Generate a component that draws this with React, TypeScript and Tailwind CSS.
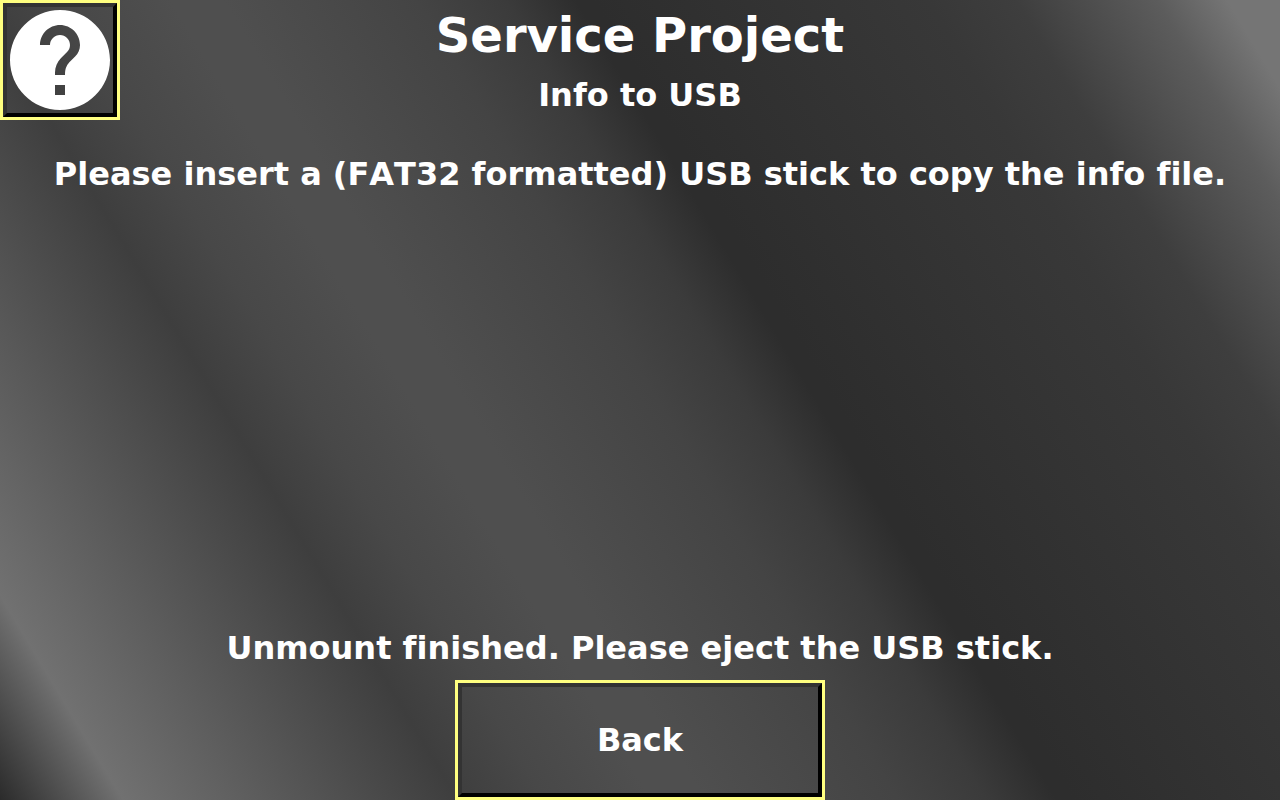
import React from 'react';

interface PanelButtonProps {
  label?: string;
  className: string;
  onClick?: () => void;
  children: React.ReactNode;
}

// Yellow outline with a sunken bevel inside it
const PanelButton: React.FC<PanelButtonProps> = ({ label, className, onClick, children }) => (
  <button
    type="button"
    aria-label={label}
    onClick={onClick}
    className={`h-[120px] cursor-pointer border-3 border-[#ffff80] font-bold text-white ${className}`}
  >
    <span className="flex h-full w-full items-center justify-center border-4 border-t-[#333333] border-r-black border-b-black border-l-[#333333]">
      {children}
    </span>
  </button>
);

const HelpIcon: React.FC = () => (
  <svg viewBox="2 2 20 20" className="size-[100px] shrink-0 fill-white" aria-hidden="true">
    <path d="M12 2C6.48 2 2 6.48 2 12s4.48 10 10 10 10-4.48 10-10S17.52 2 12 2zm1 17h-2v-2h2v2zm2.07-7.75l-.9.92C13.45 12.9 13 13.5 13 15h-2v-.5c0-1.1.45-2.1 1.17-2.83l1.24-1.26c.37-.36.59-.86.59-1.41 0-1.1-.9-2-2-2s-2 .9-2 2H8c0-2.21 1.79-4 4-4s4 1.79 4 4c0 .88-.36 1.68-.93 2.25z" />
  </svg>
);

export default function App() {
  return (
    <div className="flex min-h-screen flex-col bg-[linear-gradient(59deg,#2b2b2b_0%,#717171_7%,#3e3e3e_26%,#484848_31%,#4f4f4f_37%,#4f4f4f_40%,#444444_51%,#3b3b3b_56%,#2d2d2d_60%,#2d2d2d_61%,#383838_80%,#3e3e3e_85%,#5c5c5c_93%,#757575_97%,#757575_100%)] font-['DejaVu_Sans',sans-serif] text-[32px] leading-[50px] font-bold text-white [font-kerning:none] [font-variant-ligatures:none]">
      <header className="grid grid-cols-[120px_1fr_120px]">
        <PanelButton label="Help" className="w-full">
          <HelpIcon />
        </PanelButton>
        <div className="text-center">
          <h1 className="text-[48px] leading-[70px]">Service Project</h1>
          <h2>Info to USB</h2>
        </div>
      </header>

      <main className="flex flex-1 flex-col items-center justify-between pt-[29px] pb-[7px] text-center">
        <p>Please insert a (FAT32 formatted) USB stick to copy the info file.</p>
        <p role="status">Unmount finished. Please eject the USB stick.</p>
      </main>

      <footer className="flex justify-center">
        <PanelButton className="w-[370px]">Back</PanelButton>
      </footer>
    </div>
  );
}
